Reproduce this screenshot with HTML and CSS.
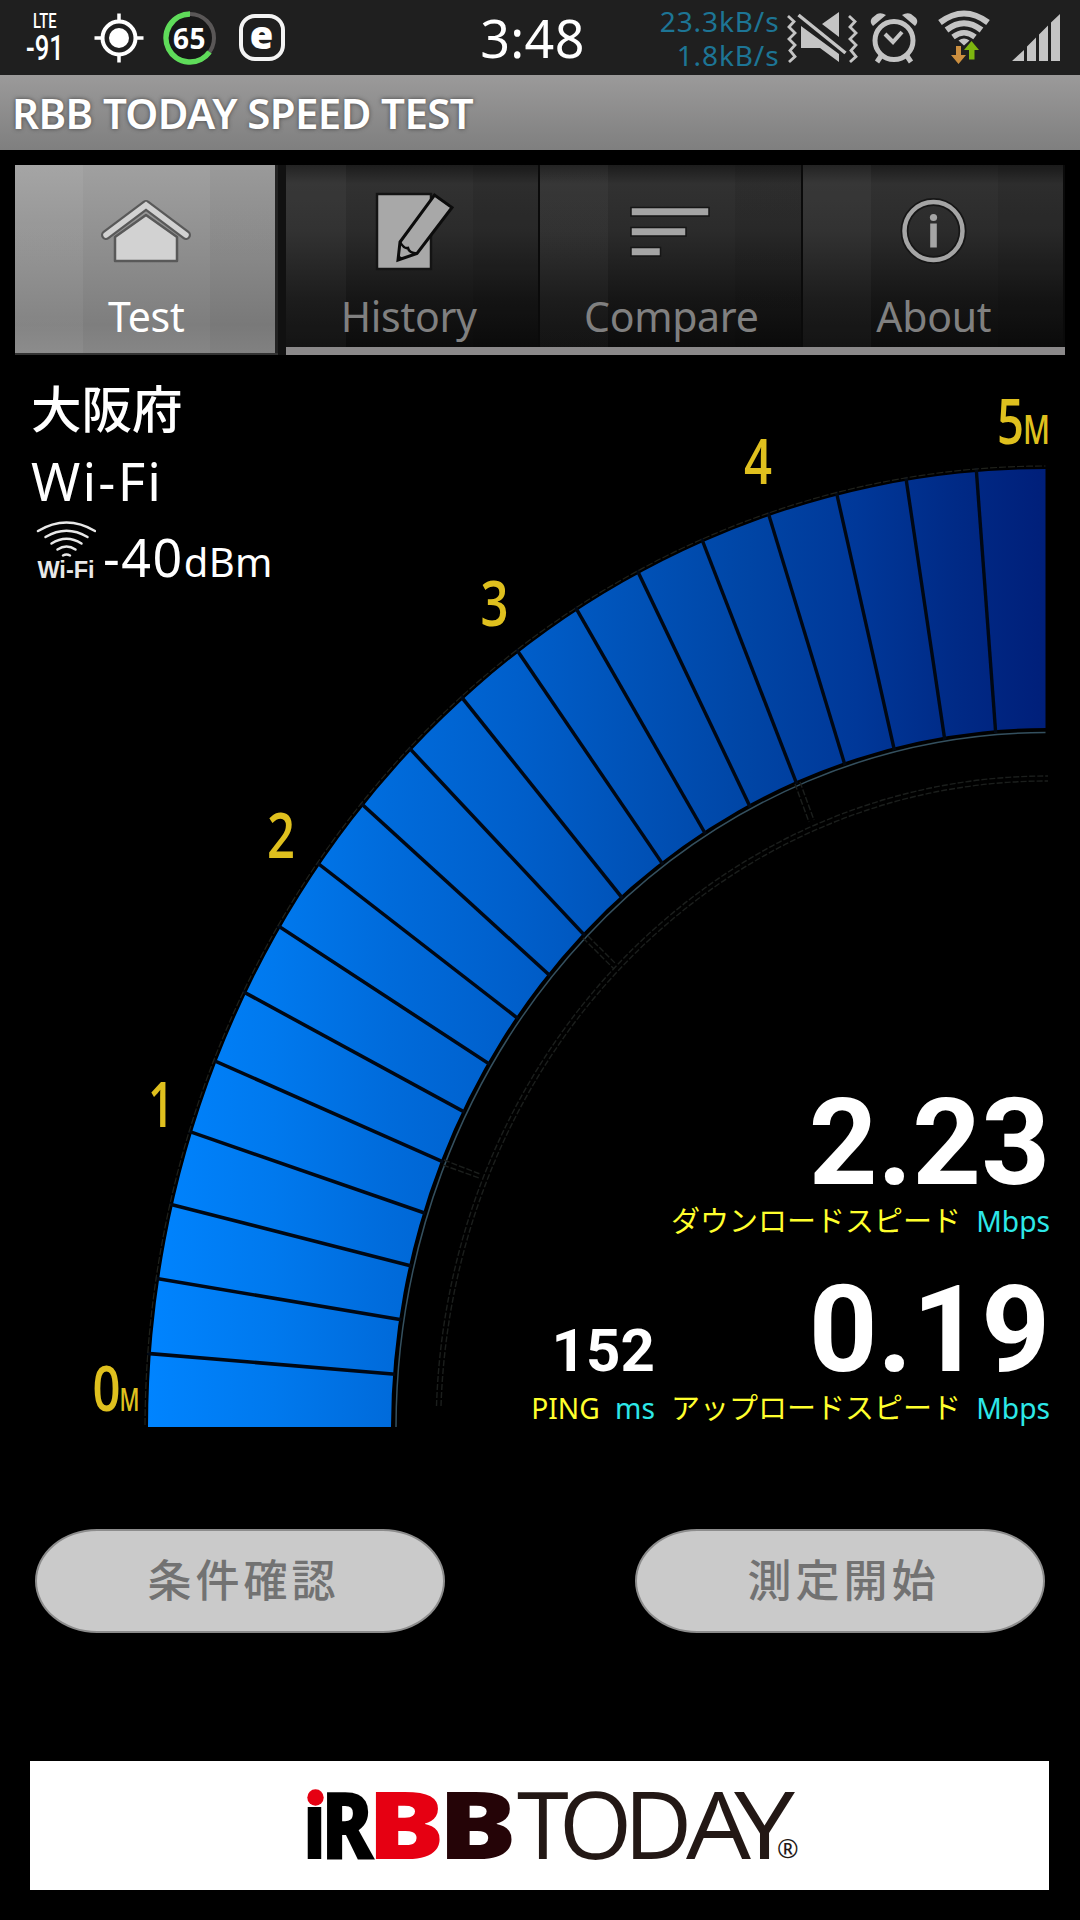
FILE: index.html
```html
<!DOCTYPE html>
<html lang="ja">
<head>
  <meta charset="UTF-8" />
  <meta name="viewport" content="width=device-width, initial-scale=1.0"/>
  <title>RBB TODAY SPEED TEST</title>
  <link rel="stylesheet" href="styles.css">
</head>
<body>
  <div class="statusbar">
    <div class="cell"><span class="lte">LTE</span><span class="rssi">-91</span></div>
    <svg class="gps" width="50" height="50" viewBox="0 0 50 50">
      <circle cx="25" cy="25" r="16.5" fill="none" stroke="#fff" stroke-width="4"/>
      <circle cx="25" cy="25" r="10" fill="#fff"/>
      <path d="M25 .5v7M25 42.500v7M.5 25h7M42.500 25h7" stroke="#fff" stroke-width="3.500"/>
    </svg>
    <div class="battery">
      <svg width="54" height="54" viewBox="0 0 54 54">
        <circle cx="27" cy="27" r="24" fill="#171717" stroke="#5a5757" stroke-width="4"/>
        <path d="M27 3A24 24 0 1 0 46.500 41" fill="none" stroke="#5fdc5a" stroke-width="5.500"/>
      </svg>
      <span>65</span>
    </div>
    <div class="eicon">e</div>
    <div class="clock">3:48</div>
    <div class="traffic"><span>23.3kB/s</span><span>1.8kB/s</span></div>
    <svg class="mute" width="72" height="54" viewBox="786 10 72 54">
      <g fill="none" stroke="#c4c4c4" stroke-width="2.800">
        <path d="M788 15l6 5.500-5 5.500 6 6-6 6 6 6-5 5.500 5 6-6 5.500"/>
        <path d="M849 15l6 5.500-5 5.500 6 6-6 6 6 6-5 5.500 5 6-6 5.500"/>
      </g>
      <path d="M798.500 14L845.500 52" stroke="#c4c4c4" stroke-width="3.500"/>
      <path d="M822 23L839 11v25zM801 25L839 53v8L820 47h-19z" fill="#c4c4c4"/>
    </svg>
    <svg class="alarm" width="50" height="52" viewBox="869 11 50 52">
      <circle cx="894" cy="39.500" r="19" fill="none" stroke="#c4c4c4" stroke-width="5"/>
      <path d="M885 33l8 8 9-10" fill="none" stroke="#c4c4c4" stroke-width="4"/>
      <path d="M873 25q-4-4-1-8l5-4q4-2 9 1zM915 25q4-4 1-8l-5-4q-4-2-9 1z" fill="#c4c4c4"/>
      <path d="M881 55l-4 6M907 55l4 6" stroke="#c4c4c4" stroke-width="5"/>
    </svg>
    <svg class="wifi" width="56" height="56" viewBox="936 8 56 56">
      <g fill="none" stroke="#c4c4c4" stroke-width="6">
        <path d="M940 20.500Q964 2.500 988 20.500"/>
        <path d="M946.500 28Q964 14.500 981.500 28"/>
        <path d="M953 35Q964 26.500 975 35" stroke-width="5.500"/>
      </g>
      <path d="M958.500 38.500q5.500-4 11 0l-5.500 5z" fill="#c4c4c4"/>
      <path d="M956 44h5v9h5l-7.500 9-7.500-9h5z" fill="#cc8f3f"/>
      <path d="M969 57.500h5.500v-9.500h4.500l-7.500-9-7.500 9h5z" fill="#7db50f"/>
    </svg>
    <svg class="signal" width="50" height="48" viewBox="1011 15 50 48">
      <path d="M1012 62L1024 51v11zM1027 47.500l9-9V62h-9zM1039 35.500l9-9V62h-9zM1051 23.500l9-8.500V62h-9z" fill="#c4c4c4"/>
    </svg>
  </div>

  <header class="titlebar"><h1>RBB TODAY SPEED TEST</h1></header>

  <nav class="tabs">
    <a class="tab active">
      <svg width="96" height="96" viewBox="98 184 96 96">
        <path d="M106 235L146 205l40 30" fill="none" stroke="#595959" stroke-width="10" stroke-linecap="round" stroke-linejoin="round"/>
        <path d="M106 235L146 205l40 30" fill="none" stroke="#d2d2d2" stroke-width="5.500" stroke-linecap="round"/>
        <path d="M115 261v-24L146 215l31 22v24z" fill="#d2d2d2" stroke="#595959" stroke-width="2.500" stroke-linejoin="round"/>
      </svg>
      <span>Test</span>
    </a>
    <a class="tab first">
      <svg width="96" height="96" viewBox="361 184 96 96">
        <path d="M377 194h54v75h-54z" fill="#a8a8a8" stroke="#141414" stroke-width="2.500"/>
        <path d="M400 242L434.500 195l17.500 12.500-35 46-19 6.500z" fill="#a8a8a8" stroke="#0c0c0c" stroke-width="3"/>
        <path d="M400 242q4 7 8 6 1 5 9 5.500" fill="none" stroke="#0c0c0c" stroke-width="2.500"/>
        <path d="M398 261v-6l5 3z" fill="#0c0c0c"/>
      </svg>
      <span>History</span>
    </a>
    <a class="tab">
      <svg width="96" height="96" viewBox="623 184 96 96">
        <path d="M631 207.500h78v8.500h-78zM631 227.500h55v8.500h-55zM631 247.500h29.500v8.500h-29.500z" fill="#a5a5a5" stroke="#161616" stroke-width="1.500"/>
      </svg>
      <span>Compare</span>
    </a>
    <a class="tab">
      <svg width="96" height="96" viewBox="885.500 184 96 96">
        <circle cx="933" cy="231" r="29" fill="none" stroke="#161616" stroke-width="8"/>
        <circle cx="933" cy="231" r="29" fill="none" stroke="#a5a5a5" stroke-width="4.500"/>
        <circle cx="933" cy="217.500" r="3.600" fill="#a5a5a5"/>
        <path d="M929.700 223.500h6.600v24h-6.600z" fill="#a5a5a5"/>
      </svg>
      <span>About</span>
    </a>
  </nav>

  <main class="meter">
    <svg class="gauge" width="1080" height="1110" viewBox="0 355 1080 1110">
      <defs>
        <linearGradient id="blue" gradientUnits="userSpaceOnUse" x1="148" y1="0" x2="1045" y2="0">
          <stop offset="0" stop-color="#0084ff"/>
          <stop offset=".14" stop-color="#0079ee"/>
          <stop offset=".27" stop-color="#006bdb"/>
          <stop offset=".41" stop-color="#005fcb"/>
          <stop offset=".53" stop-color="#0053b9"/>
          <stop offset=".67" stop-color="#0045a5"/>
          <stop offset=".79" stop-color="#003899"/>
          <stop offset=".9" stop-color="#002a86"/>
          <stop offset="1" stop-color="#001f7a"/>
        </linearGradient>
        <clipPath id="quarter"><rect x="100" y="440" width="945.500" height="987"/></clipPath>
      </defs>
      <g clip-path="url(#quarter)">
        <path d="M148 1429A899 960 0 0 1 1047 469V728A656 701 0 0 0 391 1429Z" fill="url(#blue)"/>
        <g id="ticks" transform="translate(1047 1429) scale(.9365 1)"></g>
        <g fill="none">
          <ellipse cx="1047" cy="1429" rx="902" ry="963" stroke="#1f211b" stroke-width="1.200" stroke-dasharray="7 2"/>
          <ellipse cx="1047" cy="1429" rx="651" ry="696.500" stroke="#34505f" stroke-width="1.500"/>
        </g>
      </g>
      <g fill="none" stroke="#1b1e1c" stroke-width="1.400" stroke-dasharray="6 2">
        <path d="M436.500 1406A611 653 0 0 1 1048 776"/>
        <path d="M441 1406A606 648 0 0 1 1048 781"/>
        <path d="M444 1160l36 14M443 1165l36 13M583 938l31 31M588 936l28 28M795 784l14 38M800 782l14 38"/>
      </g>
      <g class="scale">
        <text x="92.500" y="1411" textLength="28" lengthAdjust="spacingAndGlyphs">0</text>
        <text class="unit" x="119.500" y="1411" textLength="20" lengthAdjust="spacingAndGlyphs">M</text>
        <text x="148" y="1127" textLength="26" lengthAdjust="spacingAndGlyphs">1</text>
        <text x="267" y="858" textLength="28" lengthAdjust="spacingAndGlyphs">2</text>
        <text x="480.500" y="625.500" textLength="28" lengthAdjust="spacingAndGlyphs">3</text>
        <text x="744" y="484" textLength="28" lengthAdjust="spacingAndGlyphs">4</text>
        <text x="997" y="444" textLength="27" lengthAdjust="spacingAndGlyphs">5</text>
        <text class="unit big" x="1023" y="444" textLength="27" lengthAdjust="spacingAndGlyphs">M</text>
      </g>
    </svg>

    <div class="info">
      <p class="pref">大阪府</p>
      <p class="net">Wi-Fi</p>
      <div class="level">
        <div class="wifi-mark">
          <svg width="60" height="38" viewBox="36 520 60 38">
            <g fill="none" stroke="#e8e8e8" stroke-width="2.500" stroke-linecap="round">
              <path d="M38 531Q66.500 514 95 531"/>
              <path d="M45.500 537Q66.500 524.500 87.500 537"/>
              <path d="M51.500 543.500Q66.500 534 81.500 543.500"/>
              <path d="M57.500 549.500Q66.500 543.500 75.500 549.500"/>
              <path d="M63 555.500Q66.500 553.500 70 555.500"/>
            </g>
          </svg>
          <span>Wi-Fi</span>
        </div>
        <p class="dbm">-40<small>dBm</small></p>
      </div>
    </div>

    <div class="readings">
      <div class="reading down">
        <span class="value">2.23</span>
        <span class="caption"><i>ダウンロードスピード</i> <b>Mbps</b></span>
      </div>
      <div class="row">
        <div class="reading ping">
          <span class="value">152</span>
          <span class="caption">PING <b>ms</b></span>
        </div>
        <div class="reading">
          <span class="value">0.19</span>
          <span class="caption"><i>アップロードスピード</i> <b>Mbps</b></span>
        </div>
      </div>
    </div>
  </main>

  <div class="buttons">
    <button>条件確認</button>
    <button>測定開始</button>
  </div>

  <footer class="banner">
    <svg width="500" height="80" viewBox="304 1785 500 80">
      <g class="logo">
        <text class="heavy" x="303" y="1859" textLength="23" lengthAdjust="spacingAndGlyphs">i</text>
        <text class="heavy" x="321" y="1859" textLength="53" lengthAdjust="spacingAndGlyphs">R</text>
        <text class="heavy red" x="367" y="1859" textLength="78" lengthAdjust="spacingAndGlyphs">B</text>
        <text class="heavy dark" x="438" y="1859" textLength="79" lengthAdjust="spacingAndGlyphs">B</text>
        <text class="thin" x="517 559 624" y="1859">TOD</text>
        <text class="thin" x="686" y="1859" textLength="65" lengthAdjust="spacingAndGlyphs">A</text>
        <text class="thin" x="734" y="1859" textLength="61" lengthAdjust="spacingAndGlyphs">Y</text>
        <text class="reg" x="777" y="1858">®</text>
      </g>
      <rect x="304" y="1785" width="22" height="21" fill="#fff"/>
      <circle cx="315.500" cy="1797.500" r="8.200" fill="#e60012"/>
    </svg>
  </footer>

  <script>
    // 20 segments over the quarter circle
    const ticks = document.getElementById("ticks");
    for (let i = 1; i < 20; i++) {
      const line = document.createElementNS("http://www.w3.org/2000/svg", "line");
      line.setAttribute("x1", -698);
      line.setAttribute("x2", -964);
      line.setAttribute("transform", "rotate(" + i * 4.5 + ")");
      ticks.appendChild(line);
    }
  </script>
</body>
</html>
```

FILE: styles.css
```css
* {
  box-sizing: border-box;
}
body {
  margin: 0;
  width: 1080px;
  height: 1920px;
  overflow: hidden;
  background: #000;
  color: #fff;
  font-family: "Noto Sans", "Noto Sans CJK JP", sans-serif;
}
p, h1 {
  margin: 0;
}

/* status bar */
.statusbar {
  display: flex;
  align-items: center;
  height: 75px;
  padding-left: 25px;
  background: #1f1f1f;
}
.cell {
  display: flex;
  flex-direction: column;
  align-items: center;
  width: 40px;
  font-family: Roboto, sans-serif;
  font-weight: 500;
  line-height: 1;
}
.lte {
  font-size: 21px;
  transform: scaleX(.7);
}
.rssi {
  font-size: 35px;
  line-height: 33px;
  transform: scaleX(.73);
}
.gps {
  margin-left: 28.5px;
}
.battery {
  display: grid;
  place-items: center;
  margin-left: 19px;
}
.battery > * {
  grid-area: 1 / 1;
}
.battery span {
  font-size: 28px;
  font-weight: 700;
  letter-spacing: 0.5px;
  line-height: 54px;
}
.eicon {
  width: 46px;
  height: 47px;
  margin-left: 22px;
  border: 4px solid #f4f4f4;
  border-radius: 16px;
  font-family: "Open Sans", sans-serif;
  font-size: 38px;
  font-weight: 800;
  line-height: 33px;
  text-align: center;
}
.clock {
  width: 110px;
  margin-left: 193px;
  text-align: center;
  font-size: 52px;
  letter-spacing: 0.3px;
  line-height: 75px;
}
.traffic {
  display: flex;
  flex-direction: column;
  align-items: flex-end;
  width: 192px;
  color: #1d7595;
  font-size: 28px;
  letter-spacing: 0.9px;
  line-height: 34px;
}
.mute {
  margin-left: 6px;
}
.alarm {
  margin-left: 11px;
}
.wifi {
  margin-left: 17px;
}
.signal {
  margin-left: 19px;
}

/* title */
.titlebar {
  display: flex;
  align-items: center;
  height: 75px;
  padding-left: 12px;
  background: linear-gradient(#9b9a9a, #7f7f7f);
}
.titlebar h1 {
  font-size: 42px;
  font-weight: 600;
  line-height: 73px;
  letter-spacing: -0.6px;
  text-shadow: 0 0 4px #444;
}

/* tabs */
.tabs {
  display: grid;
  grid-template-columns: repeat(4, 1fr);
  height: 190px;
  margin: 15px 15px 0;
}
.tab {
  display: flex;
  flex-direction: column;
  align-items: center;
  gap: 6px;
  padding-top: 19px;
  box-shadow: inset 0 -8px #8b898a, inset -2px 0 #0a0a0a;
  background:
    linear-gradient(90deg, rgba(255,255,255,.03) 68px, transparent 68px, transparent 195px, rgba(0,0,0,.08) 195px),
    linear-gradient(#1c1c1c, #313131 10%, #2b2b2b 35%, #161616 70%, #0a0a0a);
  color: #808080;
  font-size: 41px;
  line-height: 60px;
}
/* the strip starts a little right of the active tab */
.tab.first {
  box-shadow: inset 8px 0 #111, inset 0 -8px #8b898a, inset -2px 0 #0a0a0a;
}
.tab.active {
  border-bottom: 2px solid #333;
  box-shadow: inset -3px 0 #222;
  background:
    linear-gradient(90deg, rgba(255,255,255,.05) 68px, transparent 68px, transparent 195px, rgba(0,0,0,.04) 195px),
    linear-gradient(#a0a0a0, #7e7e7e 85%, #868686);
  color: #fff;
}
.tab span {
  letter-spacing: -0.3px;
}

/* meter, the layers share one grid cell */
.meter {
  display: grid;
  height: 1110px;
}
.meter > * {
  grid-area: 1 / 1;
}
.gauge line {
  stroke: #000814;
  stroke-width: 3.6;
}
.scale {
  fill: #dfc01e;
  font-family: "Open Sans", sans-serif;
  font-size: 63px;
  font-weight: 600;
}
.scale .unit {
  font-size: 32px;
}
.scale .big {
  font-size: 39px;
}
.info {
  padding: 14px 0 0 31px;
  align-self: start;
  justify-self: start;
}
.pref {
  font-family: "Noto Sans CJK JP", sans-serif;
  font-size: 50.5px;
  font-weight: 500;
  line-height: 74px;
}
.net {
  font-size: 53px;
  letter-spacing: 2.2px;
  line-height: 75px;
}
.level {
  display: flex;
  align-items: flex-start;
}
.wifi-mark {
  display: flex;
  flex-direction: column;
  align-items: center;
  width: 70px;
  padding-top: 2px;
  font-family: "Liberation Sans", sans-serif;
  font-size: 23.5px;
  font-weight: 700;
  line-height: 25px;
  color: #e8e8e8;
}
.dbm {
  margin-left: 2px;
  font-size: 52px;
  letter-spacing: 1.5px;
  line-height: 77px;
}
.dbm small {
  font-size: 40px;
  letter-spacing: 0.3px;
}
.readings {
  align-self: end;
  justify-self: end;
  padding: 0 30px 20px 0;
}
.reading {
  display: flex;
  flex-direction: column;
  align-items: flex-end;
}
.reading .value {
  margin-top: 14px;
  font-family: Roboto, sans-serif;
  font-size: 120px;
  font-weight: 700;
  line-height: 116px;
}
.reading .caption {
  color: #ffff2d;
  font-size: 28.2px;
  line-height: 40px;
  height: 57px;
  white-space: pre;
}
.reading .caption i {
  font-style: normal;
  font-size: 29px;
}
.reading .caption b {
  margin-left: 8px;
  color: #2de8e8;
  font-weight: 400;
}
.row {
  display: flex;
  justify-content: flex-end;
  align-items: flex-end;
  gap: 16px;
}
.reading.ping .value {
  margin-top: 3px;
  font-size: 60px;
  line-height: 74px;
}

/* buttons */
.buttons {
  display: flex;
  justify-content: space-between;
  padding: 64px 35px 0;
}
.buttons button {
  width: 410px;
  height: 104px;
  padding: 0 0 6px 7px;
  border: 2px solid #8c8c8c;
  border-radius: 62px / 52px;
  background: #cacaca;
  color: #727272;
  font-family: "Noto Sans CJK JP", sans-serif;
  font-size: 44px;
  font-weight: 500;
  letter-spacing: 4px;
}

/* banner */
.banner {
  display: flex;
  height: 129px;
  margin: 128px 31px 0 30px;
  padding: 24px 0 0 274px;
  background: #fff;
}
.banner svg {
  overflow: visible;
}
.logo {
  font-family: "Open Sans", sans-serif;
  font-size: 94px;
}
.logo .heavy {
  fill: #000;
  font-weight: 800;
}
.logo .heavy.red {
  fill: #e60012;
}
.logo .heavy.dark {
  fill: #250407;
}
.logo .thin {
  fill: #231815;
  font-weight: 500;
}
.logo .reg {
  font-size: 26px;
  fill: #231815;
}
```
